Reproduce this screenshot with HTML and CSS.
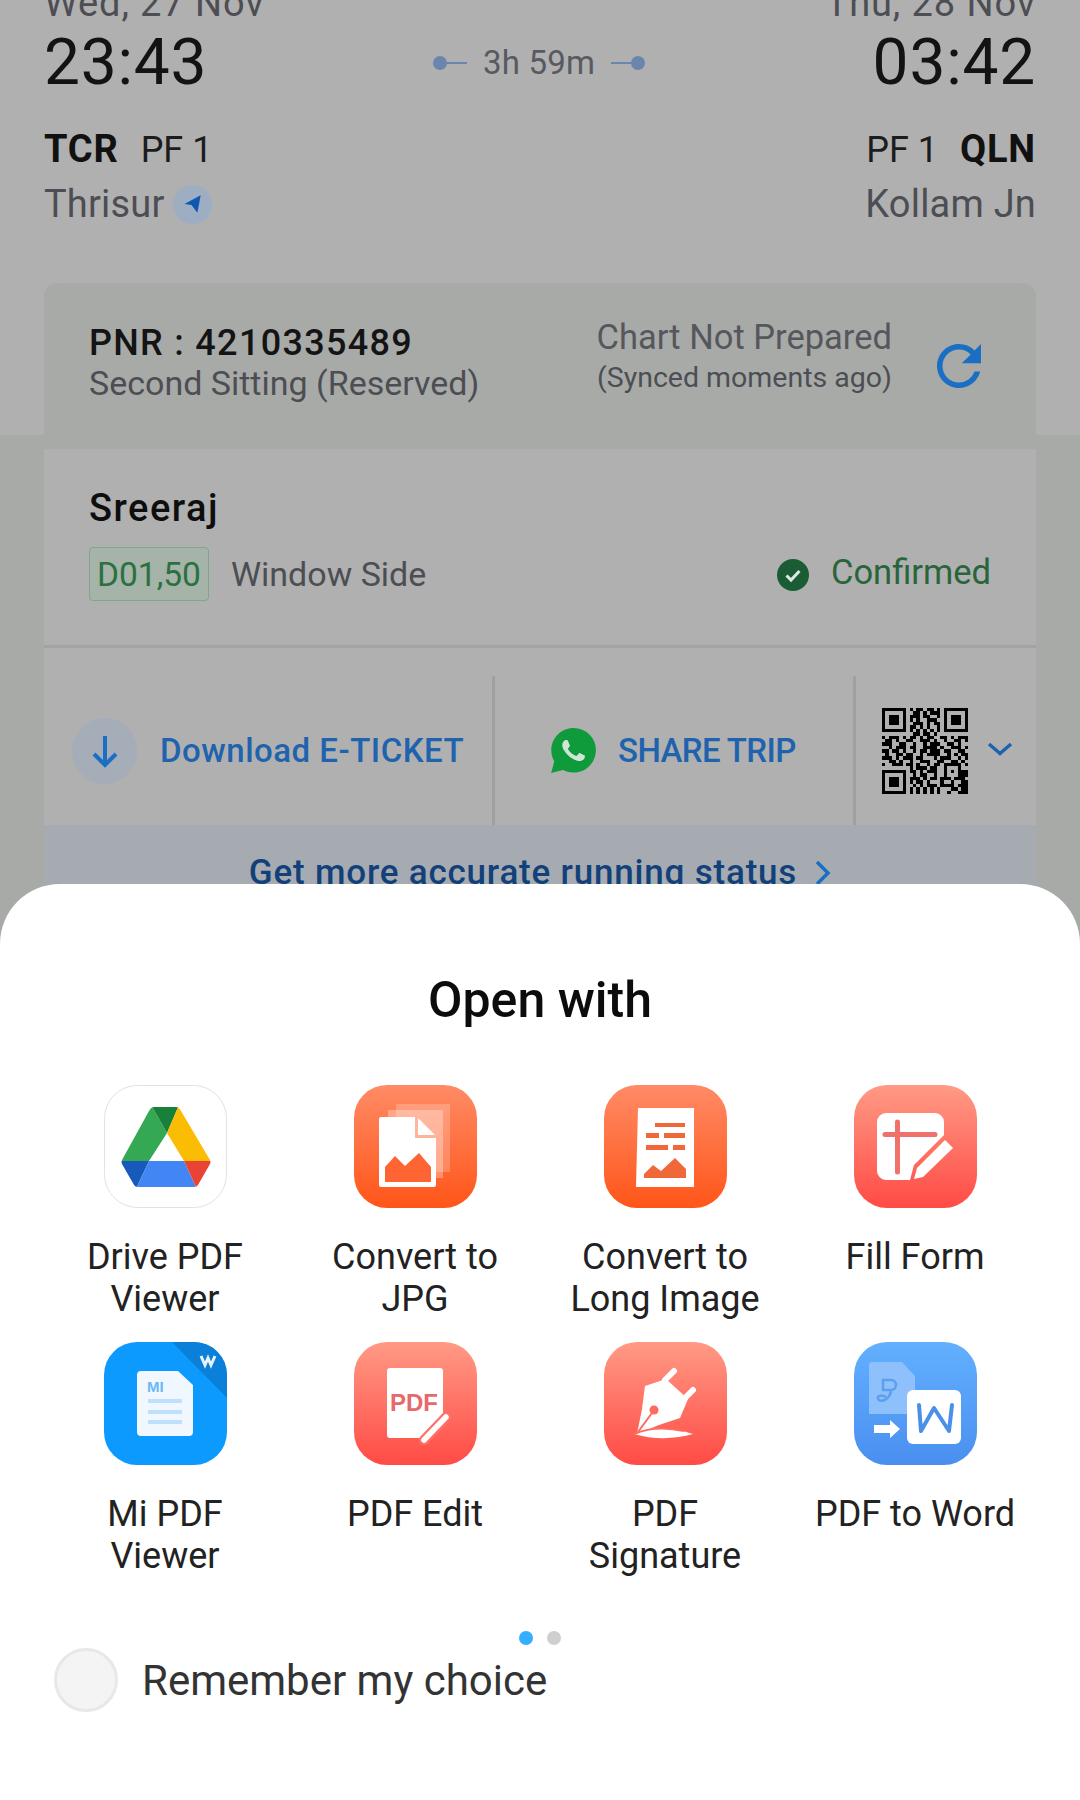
FILE: index.html
```html
<!DOCTYPE html>
<html lang="en">
<head>
<meta charset="utf-8">
<title>Open with</title>
<link rel="stylesheet" href="styles.css">
</head>
<body>
<div class="page">
  <section class="journey">
    <div class="row dates"><span>Wed, 27 Nov</span><span>Thu, 28 Nov</span></div>
    <div class="row times">
      <span>23:43</span>
      <div class="duration">
        <svg class="dur-end" viewBox="0 0 34 14"><circle cx="7" cy="7" r="7"/><rect x="13" y="6" width="21" height="2"/></svg>
        <span>3h 59m</span>
        <svg class="dur-end" viewBox="0 0 34 14"><rect x="0" y="6" width="21" height="2"/><circle cx="27" cy="7" r="7"/></svg>
      </div>
      <span>03:42</span>
    </div>
    <div class="row platforms">
      <span><b>TCR</b><i>PF 1</i></span>
      <span><i class="pf-right">PF 1</i><b>QLN</b></span>
    </div>
    <div class="row stations">
      <span class="from">Thrisur
        <span class="locate"><svg viewBox="0 0 24 24"><path d="M20 4 5 12l6.500 1L17 20z"/></svg></span>
      </span>
      <span>Kollam Jn</span>
    </div>
  </section>

  <section class="card">
    <header class="card-head">
      <div class="pnr">
        <div class="pnr-no">PNR : 4210335489</div>
        <div class="pnr-class">Second Sitting (Reserved)</div>
      </div>
      <div class="chart">
        <div class="chart-state">Chart Not Prepared</div>
        <div class="chart-sync">(Synced moments ago)</div>
      </div>
      <svg class="refresh" viewBox="4 4 16 16"><path d="M17.650 6.350A7.958 7.958 0 0 0 12 4c-4.420 0-7.990 3.580-7.990 8s3.570 8 7.990 8c3.730 0 6.840-2.550 7.730-6h-2.080A5.990 5.990 0 0 1 12 18c-3.310 0-6-2.690-6-6s2.690-6 6-6c1.660 0 3.140.690 4.220 1.780L13 11h7V4l-2.350 2.350z"/></svg>
    </header>

    <div class="passenger">
      <div class="name">Sreeraj</div>
      <div class="seat-row">
        <span class="seat">D01,50</span>
        <span class="side">Window Side</span>
        <span class="status">
          <svg viewBox="0 0 32 32"><circle cx="16" cy="16" r="16"/><path d="M9.500 16.500l4.500 4.500 8.500-9" fill="none"/></svg>
          Confirmed
        </span>
      </div>
    </div>

    <div class="actions">
      <div class="action action-download">
        <span class="dl-circle"><svg viewBox="0 0 32 36"><path d="M16 3v29M5 21l11 11 11-11"/></svg></span>
        <span class="action-label">Download E-TICKET</span>
      </div>
      <div class="action action-share">
        <svg class="wa" viewBox="0 0 24 24">
          <path class="wa-disc" d="M20.464 3.488A11.815 11.815 0 0 0 12.050 0C5.495 0 .16 5.335.157 11.892c0 2.096.547 4.142 1.588 5.945L.057 24l6.305-1.654a11.882 11.882 0 0 0 5.683 1.448h.005c6.554 0 11.890-5.335 11.893-11.893a11.821 11.821 0 0 0-3.480-8.413z"/>
          <path class="wa-phone" d="M17.472 14.382c-.297-.149-1.758-.867-2.030-.967-.273-.099-.471-.148-.670.150-.197.297-.767.966-.940 1.164-.173.199-.347.223-.644.075-.297-.150-1.255-.463-2.390-1.475-.883-.788-1.480-1.761-1.653-2.059-.173-.297-.018-.458.130-.606.134-.133.298-.347.446-.520.149-.174.198-.298.298-.497.099-.198.050-.371-.025-.520-.075-.149-.669-1.612-.916-2.207-.242-.579-.487-.500-.669-.510-.173-.008-.371-.010-.570-.010-.198 0-.520.074-.792.372-.272.297-1.040 1.016-1.040 2.479 0 1.462 1.065 2.875 1.213 3.074.149.198 2.096 3.200 5.077 4.487.709.306 1.262.489 1.694.625.712.227 1.360.195 1.871.118.571-.085 1.758-.719 2.006-1.413.248-.694.248-1.289.173-1.413-.074-.124-.272-.198-.570-.347z"/>
        </svg>
        <span class="action-label share-label">SHARE TRIP</span>
      </div>
      <div class="action action-qr">
        <svg class="qr" viewBox="0 0 25 25" shape-rendering="crispEdges">
          <path fill-rule="evenodd" d="M0 0h7v7h-7zM1 1v5h5v-5zM2 2h3v3h-3zM18 0h7v7h-7zM19 1v5h5v-5zM20 2h3v3h-3zM0 18h7v7h-7zM1 19v5h5v-5zM2 20h3v3h-3z"/>
          <path class="qr-data" d="M8 .5h1M10 .5h2M13 .5h2M16 .5h1M9 1.500h2M12 1.500h1M14 1.500h3M8 2.500h3M12 2.500h2M16 2.500h1M8 3.500h1M10 3.500h1M13 3.500h3M9 4.500h3M13 4.500h1M15 4.500h2M8 5.500h2M11 5.500h1M13 5.500h1M16 5.500h1M8 6.500h1M10 6.500h1M12 6.500h1M14 6.500h1M16 6.500h1M9 7.500h2M12 7.500h2M15 7.500h1M0 8.500h1M2 8.500h3M6 8.500h1M8 8.500h2M11 8.500h1M13 8.500h2M17 8.500h2M20 8.500h1M22 8.500h3M1 9.500h2M4 9.500h1M7 9.500h2M11 9.500h3M15 9.500h1M18 9.500h1M21 9.500h2M24 9.500h1M0 10.500h3M5 10.500h2M9 10.500h1M12 10.500h1M14 10.500h3M19 10.500h2M22 10.500h1M2 11.500h1M4 11.500h3M8 11.500h2M12 11.500h4M17 11.500h1M20 11.500h3M24 11.500h1M0 12.500h2M3 12.500h2M6 12.500h1M9 12.500h1M11 12.500h2M14 12.500h3M18 12.500h2M22 12.500h2M1 13.500h1M4 13.500h2M7 13.500h2M11 13.500h1M13 13.500h4M19 13.500h1M21 13.500h1M23 13.500h2M0 14.500h3M4 14.500h1M6 14.500h3M10 14.500h2M15 14.500h1M17 14.500h3M22 14.500h1M24 14.500h1M2 15.500h2M5 15.500h1M8 15.500h1M11 15.500h3M16 15.500h2M20 15.500h2M23 15.500h1M0 16.500h1M3 16.500h3M7 16.500h2M10 16.500h1M13 16.500h1M15 16.500h2M18 16.500h5M24 16.500h1M8 17.500h1M10 17.500h3M14 17.500h2M18 17.500h1M22 17.500h1M8 18.500h2M11 18.500h1M13 18.500h3M18 18.500h1M20 18.500h1M22 18.500h3M9 19.500h1M11 19.500h2M15 19.500h1M18 19.500h1M22 19.500h3M8 20.500h3M12 20.500h1M14 20.500h2M17 20.500h3M21 20.500h3M8 21.500h1M10 21.500h2M13 21.500h1M17 21.500h1M20 21.500h1M23 21.500h2M9 22.500h1M11 22.500h1M13 22.500h3M17 22.500h4M22 22.500h3M8 23.500h1M10 23.500h1M12 23.500h1M14 23.500h1M16 23.500h1M20 23.500h2M23 23.500h2M8 24.500h1M10 24.500h1M12 24.500h1M14 24.500h1M16 24.500h1M19 24.500h1M22 24.500h3"/>
        </svg>
        <svg class="qr-chevron" viewBox="0 0 26 14"><path d="M2 2l11 9.500L24 2"/></svg>
      </div>
    </div>

    <div class="banner">
      <span>Get more accurate running status</span>
      <svg viewBox="0 0 17 26"><path d="M3 2l11 11L3 24"/></svg>
    </div>
  </section>

  <section class="sheet">
    <h1 class="sheet-title">Open with</h1>
    <div class="apps">
      <div class="app">
        <svg class="app-icon" viewBox="0 0 123 123">
          <rect x=".5" y=".5" width="122" height="122" rx="33" fill="#fff" stroke="#e2e2e2"/>
          <g clip-path="url(#driveClip)">
            <path fill="#34a853" d="M47 20 63 48 45 76H15z"/>
            <path fill="#188038" d="M47 20h28L63 48z"/>
            <path fill="#fbbc04" d="M75 20l34 56H80L63 48z"/>
            <path fill="#185abc" d="M15 76h30L32 104z"/>
            <path fill="#4285f4" d="M45 76h35l13 28H32z"/>
            <path fill="#ea4335" d="M80 76h29L93 104z"/>
          </g>
        </svg>
        <div class="app-label">Drive PDF<br>Viewer</div>
      </div>
      <div class="app">
        <svg class="app-icon" viewBox="0 0 123 123">
          <rect width="123" height="123" rx="33" fill="url(#gOrange)"/>
          <path fill="#fff" opacity=".22" d="M42 19h54v68H42z"/>
          <path fill="#fff" opacity=".3" d="M34 25h55v68H34z"/>
          <path fill="#fff" d="M27 32h34v21h21v47a2 2 0 0 1-2 2H27a2 2 0 0 1-2-2V34a2 2 0 0 1 2-2z"/>
          <path fill="#fff" d="M64 33 81 50H64z"/>
          <path fill="#ff6533" d="M31 97V82L41 71l10 10 14-13 12 14v15z"/>
        </svg>
        <div class="app-label">Convert to<br>JPG</div>
      </div>
      <div class="app">
        <svg class="app-icon" viewBox="0 0 123 123">
          <rect width="123" height="123" rx="33" fill="url(#gOrange)"/>
          <path fill="#fff" d="M34 23h56v79H32z"/>
          <path fill="#f0683a" d="M51 38h30v4H51zM42 48h13v5H42zM60 48h21v5H60zM42 60h22v5H42zM69 60h12v5H69zM40 93v-4l9-9 8 6 14-13 11 11v9z"/>
        </svg>
        <div class="app-label">Convert to<br>Long Image</div>
      </div>
      <div class="app">
        <svg class="app-icon" viewBox="0 0 123 123">
          <rect width="123" height="123" rx="33" fill="url(#gRed)"/>
          <path fill="#fff" d="M32 28h49a9 9 0 0 1 9 9v13L60 80l-4 15H32a9 9 0 0 1-9-9V37a9 9 0 0 1 9-9z"/>
          <path stroke="#f0706a" stroke-width="5" stroke-linecap="round" d="M43.500 37v50M31 49.500h50"/>
          <path fill="#fff" d="M91 55l8 8-30 29-9 2 3-11z"/>
        </svg>
        <div class="app-label">Fill Form</div>
      </div>
      <div class="app">
        <svg class="app-icon" viewBox="0 0 123 123">
          <rect width="123" height="123" rx="33" fill="#0c9aff"/>
          <path fill="#0a80d8" d="M68 0h22a33 33 0 0 1 33 33v23z"/>
          <path fill="none" stroke="#e8f4ff" stroke-width="3" d="M97 14l4 9 3-7 3 7 4-9"/>
          <path fill="#f0f7ff" d="M37 29h37l15 14v47a4 4 0 0 1-4 4H37a4 4 0 0 1-4-4V33a4 4 0 0 1 4-4z"/>
          <text class="mi-text" x="43" y="50">MI</text>
          <path fill="#bfe0fb" d="M44 57h34v4H44zM44 68h34v4H44zM44 78h34v4H44z"/>
        </svg>
        <div class="app-label">Mi PDF<br>Viewer</div>
      </div>
      <div class="app">
        <svg class="app-icon" viewBox="0 0 123 123">
          <rect width="123" height="123" rx="33" fill="url(#gRed)"/>
          <path fill="#fff" d="M36 26h50a3 3 0 0 1 3 3v46L66 96H36a3 3 0 0 1-3-3V29a3 3 0 0 1 3-3z"/>
          <text class="pdf-text" x="36" y="69">PDF</text>
          <path stroke="#ff7068" stroke-width="10" stroke-linecap="round" d="M92 75 70 98"/>
          <path stroke="#fff" stroke-width="5.500" stroke-linecap="round" d="M92 75 70 98"/>
        </svg>
        <div class="app-label">PDF Edit</div>
      </div>
      <div class="app">
        <svg class="app-icon" viewBox="0 0 123 123">
          <rect width="123" height="123" rx="33" fill="url(#gRed)"/>
          <path stroke="#fff" stroke-width="6" stroke-linecap="round" d="M70 29 61 38M89 48 80 57"/>
          <path fill="#fff" d="M41 44 62 37 84 57 76 76 55 83 33 92 38 67z"/>
          <circle cx="50" cy="68" r="4.500" fill="#ff6a60"/>
          <path stroke="#ff6a60" stroke-width="2" d="M48 71 34 90"/>
          <path fill="#fff" d="M30 92C44 84 66 84 89 92 72 97 50 98 30 92z"/>
          <path stroke="#ff6a60" stroke-width="2" fill="none" d="M30 92C44 86 62 85 80 89"/>
        </svg>
        <div class="app-label">PDF<br>Signature</div>
      </div>
      <div class="app">
        <svg class="app-icon" viewBox="0 0 123 123">
          <rect width="123" height="123" rx="33" fill="url(#gBlue)"/>
          <path fill="#8ec0fb" d="M18 20h30l13 14v38H15V23a3 3 0 0 1 3-3z"/>
          <path fill="none" stroke="#5b9ff0" stroke-width="2.500" d="M29 38h8a5 5 0 0 1 0 10H29V38zM37 48c0 8-10 14-13 9-2-4 6-4 8-2"/>
          <rect x="53" y="48" width="54" height="54" rx="6" fill="#fff"/>
          <path fill="none" stroke="#4a90e8" stroke-width="4" stroke-linejoin="round" stroke-linecap="round" d="M65 63l2 26 13-23 15 23 3-26"/>
          <path fill="#fff" d="M20 83h16v-5l10 9-10 9v-5H20z"/>
        </svg>
        <div class="app-label">PDF to Word</div>
      </div>
    </div>
    <div class="pager"><span class="dot dot-on"></span><span class="dot"></span></div>
    <div class="remember">
      <span class="radio"></span>
      <span class="remember-label">Remember my choice</span>
    </div>
  </section>

  <svg class="defs" width="0" height="0" aria-hidden="true">
    <defs>
      <linearGradient id="gOrange" x1="0" y1="0" x2="0" y2="1"><stop offset="0" stop-color="#ff8b66"/><stop offset="1" stop-color="#ff5519"/></linearGradient>
      <linearGradient id="gRed" x1="0" y1="0" x2="0" y2="1"><stop offset="0" stop-color="#ff9a85"/><stop offset="1" stop-color="#ff4b45"/></linearGradient>
      <linearGradient id="gBlue" x1="0" y1="0" x2="0" y2="1"><stop offset="0" stop-color="#62b0ff"/><stop offset="1" stop-color="#4a8ff0"/></linearGradient>
      <clipPath id="driveClip"><path d="M50 22h22q3 0 5 4l29 49q1 2 0 4L94 100q-1 2-4 2H34q-3 0-4-2L18 79q-1-2 0-4L45 26q2-4 5-4z"/></clipPath>
    </defs>
  </svg>
</div>
</body>
</html>
```
FILE: styles.css
```css
* { box-sizing: border-box; }
html, body { margin: 0; padding: 0; }
body { font-family: Roboto, "Noto Sans", sans-serif; }

.page {
  position: relative;
  width: 1080px;
  height: 1800px;
  overflow: hidden;
  background: linear-gradient(#b0b0b0 435px, #a8aaa8 435px);
}

/* Journey summary */
.journey { position: relative; padding: 0 44px; margin-top: -17px; }
.row { display: flex; justify-content: space-between; align-items: center; }
.dates { font-size: 38px; line-height: 40px; letter-spacing: .9px; color: #4c4e54; }
.times { font-size: 64px; line-height: 70px; letter-spacing: .8px; color: #131313; margin-top: 5px; }
.duration { display: flex; align-items: center; gap: 16px; font-size: 33px; letter-spacing: .2px; color: #575a60; margin-left: -2px; }
.dur-end { width: 34px; height: 14px; fill: #6b86ad; }
.platforms { font-size: 36px; line-height: 44px; color: #1c1c1e; margin-top: 29px; }
.platforms b { font-size: 38px; font-weight: 700; color: #111; letter-spacing: .8px; }
.platforms i { font-style: normal; margin-left: 22px; }
.platforms i.pf-right { margin-left: 0; margin-right: 22px; }
.stations { font-size: 38px; line-height: 44px; letter-spacing: .2px; color: #4c4e54; margin-top: 10px; }
.from { display: flex; align-items: center; gap: 8px; }
.locate { width: 39px; height: 39px; border-radius: 50%; background: #9dadc2; display: flex; align-items: center; justify-content: center; }
.locate svg { width: 26px; height: 26px; fill: #0f58b0; }

/* Ticket card */
.card {
  margin: 57px 44px 0;
  height: 700px;
  background: #b0b0b0;
  border-radius: 14px 14px 0 0;
  overflow: hidden;
}
.card-head { height: 166px; background: #a8aaa8; display: flex; align-items: center; padding: 0 55px 0 45px; }
.pnr { flex: 1; margin-top: -8px; }
.pnr-no { font-size: 36px; line-height: 42px; font-weight: 500; color: #141414; letter-spacing: 1.300px; }
.pnr-class { font-size: 34px; line-height: 39px; color: #4c4e54; }
.chart { text-align: right; margin-right: 45px; margin-top: -19px; }
.chart-state { font-size: 34.500px; line-height: 42px; color: #55575c; }
.chart-sync { font-size: 28.500px; line-height: 40px; color: #4c4e54; }
.refresh { width: 44px; height: 44px; fill: #1a6fc4; }

.passenger { height: 199px; padding: 37px 45px 0; border-bottom: 3px solid #a3a3a3; }
.name { font-size: 38px; line-height: 44px; font-weight: 500; color: #0e0e0e; letter-spacing: 1.500px; }
.seat-row { display: flex; align-items: center; margin-top: 17px; }
.seat { height: 54px; padding: 0 7px; display: flex; align-items: center; border: 1px solid #7da88a; border-radius: 4px; background: #a5b3a8; color: #2a7040; font-size: 33.500px; }
.side { margin-left: 22px; font-size: 34px; color: #4c4e54; }
.status { margin-left: auto; margin-top: -4px; display: flex; align-items: center; gap: 22px; font-size: 34.500px; color: #28653b; }
.status svg { width: 32px; height: 32px; margin-top: 6px; }
.status circle { fill: #1a5c33; }
.status path { stroke: #dfe8e0; stroke-width: 3; }

.actions { height: 177px; display: flex; align-items: stretch; }
.action { display: flex; align-items: center; margin-top: 28px; }
.action-download { width: 451px; padding-left: 28px; gap: 23px; border-right: 3px solid #a0a0a0; }
.action-share { width: 361px; padding-left: 56px; gap: 22px; border-right: 3px solid #a0a0a0; }
.action-qr { flex: 1; padding-left: 26px; gap: 19px; }
.dl-circle { width: 65px; height: 66px; border-radius: 50%; background: #a5adb8; display: flex; align-items: center; justify-content: center; }
.dl-circle svg { width: 32px; height: 36px; fill: none; stroke: #1a6fc4; stroke-width: 4; }
.action-label { font-size: 33px; color: #1f63ae; font-weight: 500; letter-spacing: .5px; }
.share-label { letter-spacing: -.6px; }
.wa { width: 45px; height: 45px; }
.wa-disc { fill: #0f9a3c; }
.wa-phone { fill: #cfe6d4; }
.qr { width: 86px; height: 86px; }
.qr-data { fill: none; stroke: #000; stroke-width: 1; }
.qr-chevron { width: 26px; height: 14px; fill: none; stroke: #1f63ae; stroke-width: 3.500; margin-top: -4px; }

.banner { height: 120px; background: #a5abb0; display: flex; justify-content: center; align-items: flex-start; gap: 17px; padding-top: 27px; font-size: 35px; line-height: 42px; font-weight: 500; letter-spacing: .8px; color: #12407a; }
.banner svg { width: 17px; height: 26px; fill: none; stroke: #1a6fc4; stroke-width: 3.500; margin-top: 8px; }

/* Bottom sheet */
.sheet {
  position: absolute;
  left: 0; right: 0; top: 884px; bottom: 0;
  background: #fff;
  border-radius: 60px 60px 0 0;
}
.sheet-title { margin: 0; padding-top: 88px; text-align: center; font-size: 50px; line-height: 56px; font-weight: 500; color: #0c0c0c; }
.apps { display: grid; grid-template-columns: repeat(4, 250px); grid-auto-rows: 257px; padding-left: 40px; margin-top: 57px; }
.app { display: flex; flex-direction: column; align-items: center; }
.app-icon { width: 123px; height: 123px; display: block; }
.app-label { margin-top: 29px; font-size: 36px; line-height: 41.500px; text-align: center; color: #222; }
.mi-text { font: 700 15px "Liberation Sans", sans-serif; fill: #6cb8f5; }
.pdf-text { font: 700 24px "Liberation Sans", sans-serif; fill: #e8696b; }
.pager { display: flex; justify-content: center; gap: 14px; margin-top: 32px; }
.dot { width: 14px; height: 14px; border-radius: 50%; background: #cfcfcf; }
.dot-on { background: #35aeff; }
.remember { display: flex; align-items: center; gap: 24px; padding-left: 54px; margin-top: 3px; }
.radio { width: 64px; height: 64px; border-radius: 50%; background: #f4f4f4; border: 3px solid #e8e8e8; }
.remember-label { font-size: 42px; line-height: 50px; margin-top: 2px; color: #333; }
.defs { position: absolute; }
```
